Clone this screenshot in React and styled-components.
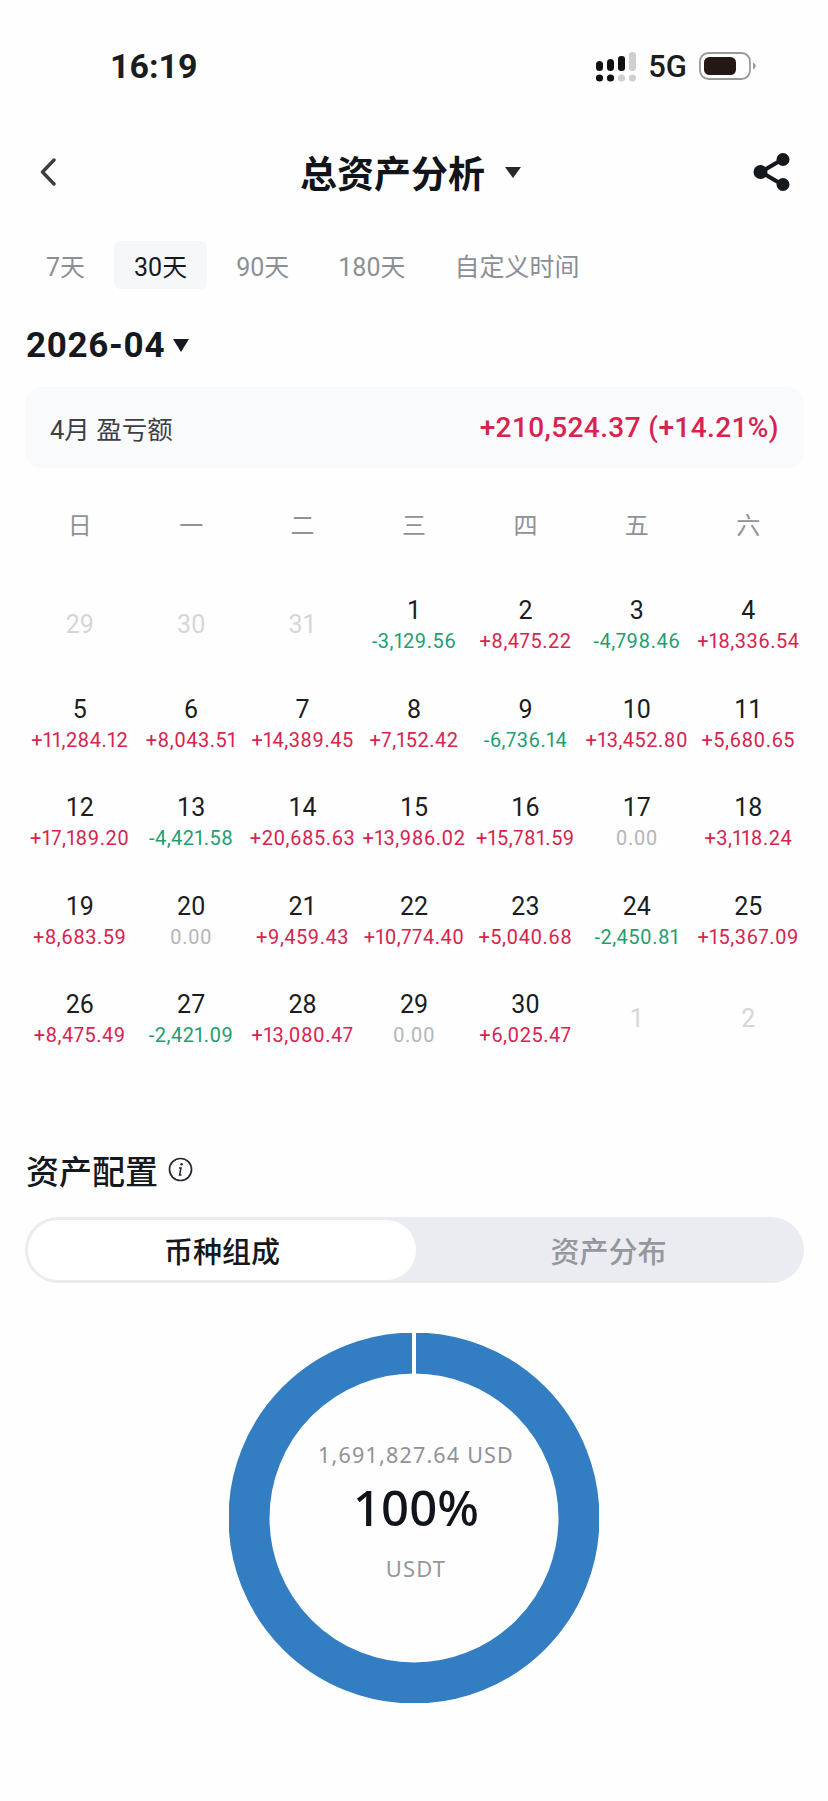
import React from "react";
import styled, { createGlobalStyle } from "styled-components";

const CJK = `"Noto Sans CJK SC", sans-serif`;
const NUM = `Roboto, "Noto Sans CJK SC", sans-serif`;

const GlobalStyle = createGlobalStyle`
    html, body {
        margin: 0;
        padding: 0;
        background: #fefefe;
    }
    * {
        box-sizing: border-box;
    }
`;

const tabs = ["7天", "30天", "90天", "180天", "自定义时间"];
const weekDays = ["日", "一", "二", "三", "四", "五", "六"];

const days = [
    { day: "29", muted: true },
    { day: "30", muted: true },
    { day: "31", muted: true },
    { day: "1", value: "-3,129.56" },
    { day: "2", value: "+8,475.22" },
    { day: "3", value: "-4,798.46" },
    { day: "4", value: "+18,336.54" },
    { day: "5", value: "+11,284.12" },
    { day: "6", value: "+8,043.51" },
    { day: "7", value: "+14,389.45" },
    { day: "8", value: "+7,152.42" },
    { day: "9", value: "-6,736.14" },
    { day: "10", value: "+13,452.80" },
    { day: "11", value: "+5,680.65" },
    { day: "12", value: "+17,189.20" },
    { day: "13", value: "-4,421.58" },
    { day: "14", value: "+20,685.63" },
    { day: "15", value: "+13,986.02" },
    { day: "16", value: "+15,781.59" },
    { day: "17", value: "0.00" },
    { day: "18", value: "+3,118.24" },
    { day: "19", value: "+8,683.59" },
    { day: "20", value: "0.00" },
    { day: "21", value: "+9,459.43" },
    { day: "22", value: "+10,774.40" },
    { day: "23", value: "+5,040.68" },
    { day: "24", value: "-2,450.81" },
    { day: "25", value: "+15,367.09" },
    { day: "26", value: "+8,475.49" },
    { day: "27", value: "-2,421.09" },
    { day: "28", value: "+13,080.47" },
    { day: "29", value: "0.00" },
    { day: "30", value: "+6,025.47" },
    { day: "1", muted: true },
    { day: "2", muted: true },
];

function valueColor(value) {
    if (value === "0.00") return "#b4b6ba";
    return value[0] === "-" ? "#1f9e70" : "#d8234f";
}

function SignalIcon() {
    return (
        <SignalSvg width="40" height="32" viewBox="0 0 40 32">
            <rect x="0" y="9" width="7" height="10" rx="3.5" fill="#111" />
            <rect x="11" y="7" width="7" height="12" rx="3.5" fill="#111" />
            <rect x="22" y="4" width="7" height="15" rx="3" fill="#111" />
            <rect x="33" y="0" width="7" height="19" rx="3" fill="#cfcfcf" />
            <circle cx="3.5" cy="26" r="3.6" fill="#111" />
            <circle cx="14.5" cy="26" r="3.6" fill="#111" />
            <circle cx="25.5" cy="26" r="3.6" fill="#cfcfcf" />
            <circle cx="36.5" cy="26" r="3.6" fill="#cfcfcf" />
        </SignalSvg>
    );
}

function BatteryIcon() {
    return (
        <svg width="57" height="28" viewBox="0 0 57 28">
            <rect x="1" y="1" width="50" height="26" rx="8.5" fill="none" stroke="#999" strokeWidth="1.8" />
            <rect x="5" y="5" width="32" height="18" rx="5.5" fill="#231815" />
            <path d="M54 10.5c1.8.8 2.6 2 2.6 3.5s-.8 2.700-2.600 3.500z" fill="#999" />
        </svg>
    );
}

function BackIcon() {
    return (
        <svg width="18" height="28" viewBox="0 0 18 28">
            <path d="M15 2 L3.500 14 L15 26" fill="none" stroke="#3a3d42" strokeWidth="3.400" strokeLinecap="round" strokeLinejoin="round" />
        </svg>
    );
}

function ShareIcon() {
    return (
        <svg width="38" height="40" viewBox="0 0 38 40">
            <path d="M30 7 L8 20 L30 33" fill="none" stroke="#15181d" strokeWidth="4" />
            <circle cx="30" cy="7.500" r="6.500" fill="#15181d" />
            <circle cx="7.500" cy="20" r="7" fill="#15181d" />
            <circle cx="30" cy="32.500" r="6.500" fill="#15181d" />
        </svg>
    );
}

function InfoIcon() {
    return (
        <svg width="25" height="25" viewBox="0 0 25 25">
            <circle cx="12.500" cy="12.500" r="11" fill="none" stroke="#25282d" strokeWidth="1.700" />
            <circle cx="13.600" cy="7.200" r="1.300" fill="#25282d" />
            <path d="M11 11 H13 L11.500 18 H13.500" fill="none" stroke="#25282d" strokeWidth="1.500" />
        </svg>
    );
}

function Donut() {
    return (
        <svg width="370" height="370" viewBox="0 0 370 370">
            <circle cx="185" cy="185" r="165" fill="none" stroke="#337dc2" strokeWidth="41" />
            <rect x="183" y="0" width="4" height="42" fill="#fefefe" />
        </svg>
    );
}

export default function App() {
    return (
        <Page>
            <GlobalStyle />
            <StatusBar>
                <Time>16:19</Time>
                <StatusRight>
                    <SignalIcon />
                    <Network>5G</Network>
                    <BatteryIcon />
                </StatusRight>
            </StatusBar>
            <NavBar>
                <BackIcon />
                <NavTitle>
                    总资产分析
                    <TitleCaret />
                </NavTitle>
                <ShareIcon />
            </NavBar>
            <Tabs>
                {tabs.map((tab) => (
                    <Tab key={tab} $active={tab === "30天"}>
                        {tab}
                    </Tab>
                ))}
            </Tabs>
            <MonthRow>
                2026-04
                <MonthCaret />
            </MonthRow>
            <Summary>
                <SummaryLabel>4月 盈亏额</SummaryLabel>
                <SummaryValue>+210,524.37 (+14.21%)</SummaryValue>
            </Summary>
            <WeekRow>
                {weekDays.map((d) => (
                    <WeekDay key={d}>{d}</WeekDay>
                ))}
            </WeekRow>
            <Calendar>
                {days.map((d, i) => (
                    <DayCell key={i}>
                        <DayNumber $muted={d.muted}>{d.day}</DayNumber>
                        {d.value && <DayValue $color={valueColor(d.value)}>{d.value}</DayValue>}
                    </DayCell>
                ))}
            </Calendar>
            <SectionTitle>
                资产配置
                <InfoIcon />
            </SectionTitle>
            <Toggle>
                <ToggleActive>币种组成</ToggleActive>
                <ToggleOther>资产分布</ToggleOther>
            </Toggle>
            <DonutWrap>
                <Donut />
                <DonutText>
                    <DonutAmount>1,691,827.64 USD</DonutAmount>
                    <DonutPercent>100%</DonutPercent>
                    <DonutCoin>USDT</DonutCoin>
                </DonutText>
            </DonutWrap>
        </Page>
    );
}

const Page = styled.div`
    width: 828px;
    height: 1801px;
    overflow: hidden;
    background: #fefefe;
`;
const StatusBar = styled.div`
    height: 132px;
    display: flex;
    align-items: center;
    justify-content: space-between;
    padding: 0 72px 0 110px;
`;
const Time = styled.div`
    font-family: Roboto, sans-serif;
    font-size: 34px;
    font-weight: 700;
    color: #1c1c1e;
`;
const StatusRight = styled.div`
    display: flex;
    align-items: center;
    gap: 12px;
`;
const SignalSvg = styled.svg`
    margin-top: 4px;
`;
const Network = styled.div`
    font-family: Roboto, sans-serif;
    font-size: 31px;
    font-weight: 500;
    color: #1c1c1e;
`;
const NavBar = styled.div`
    height: 80px;
    display: flex;
    align-items: center;
    justify-content: space-between;
    padding: 0 37px 0 39px;
`;
const NavTitle = styled.div`
    display: flex;
    align-items: center;
    gap: 20px;
    font-family: ${CJK};
    font-size: 37px;
    font-weight: 700;
    color: #111418;
    margin-left: 11px;
`;
const TitleCaret = styled.span`
    width: 0;
    height: 0;
    border-left: 8px solid transparent;
    border-right: 8px solid transparent;
    border-top: 11px solid #26292e;
`;
const Tabs = styled.div`
    display: flex;
    align-items: center;
    gap: 9px;
    padding: 29px 0 0 26px;
`;
const Tab = styled.div`
    height: 48px;
    padding: 0 20px;
    display: flex;
    align-items: center;
    border-radius: 6px;
    font-family: ${NUM};
    font-size: 25px;
    color: ${(p) => (p.$active ? "#15181d" : "#8c8f94")};
    background: ${(p) => (p.$active ? "#f5f7f9" : "transparent")};
`;
const MonthRow = styled.div`
    display: flex;
    align-items: center;
    gap: 8px;
    margin-top: 31px;
    padding-left: 26px;
    height: 50px;
    font-family: Roboto, sans-serif;
    font-size: 35px;
    font-weight: 700;
    letter-spacing: 0.7px;
    color: #15181f;
`;
const MonthCaret = styled.span`
    width: 0;
    height: 0;
    border-left: 8px solid transparent;
    border-right: 8px solid transparent;
    border-top: 13px solid #15181f;
`;
const Summary = styled.div`
    margin: 17px 24px 0 25px;
    height: 81px;
    padding: 0 25px;
    display: flex;
    align-items: center;
    justify-content: space-between;
    background: #f8fafb;
    border-radius: 16px;
`;
const SummaryLabel = styled.div`
    font-family: ${NUM};
    font-size: 25.500px;
    color: #3d4046;
`;
const SummaryValue = styled.div`
    font-family: Roboto, sans-serif;
    font-size: 28px;
    font-weight: 500;
    letter-spacing: 0.4px;
    color: #d8234f;
`;
const WeekRow = styled.div`
    display: grid;
    grid-template-columns: repeat(7, 1fr);
    padding: 0 24px;
    height: 110px;
    align-items: center;
`;
const WeekDay = styled.div`
    text-align: center;
    font-family: ${CJK};
    font-size: 24px;
    color: #8f9297;
`;
const Calendar = styled.div`
    display: grid;
    grid-template-columns: repeat(7, 1fr);
    grid-auto-rows: 98.500px;
    padding: 0 24px;
    margin-top: -1px;
`;
const DayCell = styled.div`
    display: flex;
    flex-direction: column;
    align-items: center;
    justify-content: center;
    white-space: nowrap;
`;
const DayNumber = styled.div`
    font-family: Roboto, sans-serif;
    font-size: 25px;
    line-height: 31px;
    margin-bottom: ${(p) => (p.$muted ? "4px" : "0")};
    color: ${(p) => (p.$muted ? "#d4d6d9" : "#1b1d21")};
`;
const DayValue = styled.div`
    font-family: Roboto, sans-serif;
    font-size: 20px;
    line-height: 31px;
    letter-spacing: 0.5px;
    font-variant-numeric: proportional-nums;
    color: ${(p) => p.$color};
`;
const SectionTitle = styled.div`
    display: flex;
    align-items: center;
    gap: 10px;
    margin-top: 76px;
    padding-left: 26px;
    height: 48px;
    font-family: ${CJK};
    font-size: 33px;
    font-weight: 500;
    color: #15181d;
`;
const Toggle = styled.div`
    margin: 23px 24px 0 25px;
    height: 66px;
    padding: 3px;
    display: flex;
    align-items: center;
    background: #eaecf1;
    border-radius: 33px;
`;
const ToggleActive = styled.div`
    width: 388px;
    height: 60px;
    display: flex;
    align-items: center;
    justify-content: center;
    background: #fff;
    border-radius: 30px;
    font-family: ${CJK};
    font-size: 29px;
    font-weight: 500;
    color: #15181d;
`;
const ToggleOther = styled.div`
    flex: 1;
    text-align: center;
    font-family: ${CJK};
    font-size: 29px;
    font-weight: 500;
    color: #94979c;
`;
const DonutWrap = styled.div`
    position: relative;
    width: 370px;
    height: 370px;
    margin: 50px 0 0 229px;
`;
const DonutText = styled.div`
    position: absolute;
    inset: 0;
    display: flex;
    flex-direction: column;
    align-items: center;
    justify-content: center;
    padding: 0 0 13px 4px;
`;
const DonutAmount = styled.div`
    font-family: "Noto Sans", sans-serif;
    font-size: 21.500px;
    line-height: 30px;
    letter-spacing: 1.200px;
    color: #8f9297;
`;
const DonutPercent = styled.div`
    font-family: "Noto Sans", sans-serif;
    font-size: 49px;
    line-height: 70px;
    font-weight: 500;
    margin-top: 2px;
    color: #11141b;
`;
const DonutCoin = styled.div`
    font-family: "Noto Sans", sans-serif;
    font-size: 22px;
    line-height: 30px;
    letter-spacing: 1.200px;
    margin-top: 11px;
    color: #94979c;
`;
